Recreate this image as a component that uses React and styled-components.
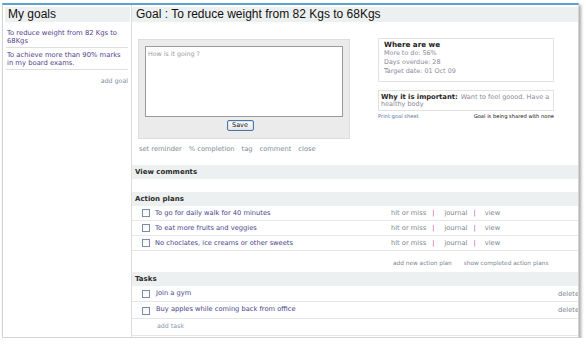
import React from "react";
import styled, { createGlobalStyle } from "styled-components";

const Global = createGlobalStyle`
  html, body { margin: 0; padding: 0; background: #fff; }
  body { font-family: "DejaVu Sans", Verdana, sans-serif; }
  * { box-sizing: border-box; }
`;

const Frame = styled.div`
  margin: 3px 0 0 2px;
  width: 577px;
  height: 335px;
  border: 1px solid #d4d4d4;
  border-top: 2px solid #5ea2d4;
  box-shadow: 2px 2px 3px rgba(0, 0, 0, 0.35);
  display: flex;
  overflow: hidden;
  background: #fff;
`;

const Sidebar = styled.div`
  width: 129px;
  border-right: 1px solid #dcdcdc;
  padding: 2px 1px 0 2px;
`;

const Main = styled.div`
  flex: 1;
  min-width: 0;
  overflow: hidden;
  padding-top: 2px;
`;

const PageTitle = styled.div`
  height: 15px;
  line-height: 15px;
  background: #edf0f0;
  font-family: "Liberation Sans", Arial, sans-serif;
  font-size: 12px;
  color: #111;
  padding-left: ${(p) => p.$indent || 3}px;
  white-space: nowrap;
`;

const GoalList = styled.div`
  margin: 4px 2px 0 1px;
`;

const GoalItem = styled.div`
  padding: 3px 5px 2px 1px;
  border-bottom: 1px solid #dedede;
  font-size: 6.8px;
  line-height: 8px;
  color: #553d8c;
`;

const AddGoal = styled.div`
  margin-top: 7px;
  text-align: right;
  font-size: 6.3px;
  line-height: 8px;
  color: #7d8fa0;
`;

const TopSection = styled.div`
  height: 143px;
  display: flex;
  padding: 17px 0 0 6px;
`;

const LeftCol = styled.div`
  width: 212px;
`;

const GrayBox = styled.div`
  width: 212px;
  height: 100px;
  background: #ebebeb;
  border: 1px solid #dddddd;
  padding: 6px 6px 0 6px;
`;

const TextBox = styled.div`
  width: 198px;
  height: 71px;
  background: #fff;
  border: 1px solid #9a9a9a;
  padding: 3px 2px;
  font-size: 6.3px;
  color: #9a9a9a;
`;

const SaveRow = styled.div`
  display: flex;
  justify-content: center;
  padding-top: 3px;
  padding-right: 8px;
`;

const SaveButton = styled.div`
  width: 27px;
  height: 11px;
  border: 1px solid #4a74a8;
  border-radius: 2px;
  background: linear-gradient(#fdfdfd, #e6e6e6);
  box-shadow: inset 0 0 0 1px #d8e4f2;
  font-size: 6.5px;
  line-height: 9px;
  text-align: center;
  color: #111;
`;

const ActionLinks = styled.div`
  display: flex;
  gap: 7px;
  margin-top: 6px;
  padding-left: 1px;
  font-size: 6.7px;
  line-height: 8px;
  color: #7d8b99;
  white-space: nowrap;
`;

const RightCol = styled.div`
  margin-left: 28px;
  width: 176px;
  margin-top: -1px;
`;

const InfoBox = styled.div`
  border: 1px solid #e2e2e2;
  padding: ${(p) => p.$pad};
  margin-bottom: ${(p) => p.$mb || 0}px;
  color: #8c8898;
  font-size: 6.4px;
`;

const InfoTitle = styled.div`
  font-weight: bold;
  font-size: 7.2px;
  line-height: 9px;
  color: #1e1e1e;
`;

const InfoLine = styled.div`
  line-height: 9px;
`;

const WhyLine = styled.div`
  font-size: 6.5px;
  line-height: 7px;
  color: #8c8898;
  white-space: nowrap;
`;

const WhyLabel = styled.b`
  color: #1e1e1e;
  font-size: 6.8px;
  margin-right: 3px;
`;

const PrintRow = styled.div`
  display: flex;
  justify-content: space-between;
  margin-top: 2px;
  font-size: 5.2px;
  line-height: 7px;
  white-space: nowrap;
`;

const PrintLink = styled.span`
  color: ${(p) => p.$c};
`;

const SectionBar = styled.div`
  height: 14px;
  line-height: 14px;
  background: #edf0f0;
  padding-left: 3px;
  font-size: 7px;
  font-weight: bold;
  color: #2a2a2a;
  margin-top: ${(p) => p.$mt || 0}px;
`;

const Row = styled.div`
  display: flex;
  align-items: center;
  height: ${(p) => p.$h}px;
  border-bottom: 1px solid #e6e6e6;
  padding-left: 10px;
  font-size: 6.7px;
  white-space: nowrap;
`;

const Check = styled.span`
  width: 8px;
  height: 8px;
  flex: none;
  border: 1px solid #7d8ca6;
  background: linear-gradient(#f4f6fa, #ffffff);
  margin-right: ${(p) => p.$gap}px;
  margin-top: ${(p) => p.$dy || 0}px;
`;

const ItemText = styled.span`
  color: #4a3f8c;
  width: ${(p) => p.$w}px;
  flex: none;
  margin-top: ${(p) => p.$dy || 0}px;
`;

const PlanLinks = styled.span`
  display: flex;
  color: #7d8792;
`;

const Pipe = styled.span`
  color: #c03ca8;
  margin: 0 ${(p) => p.$r}px 0 ${(p) => p.$l}px;
`;

const Delete = styled.span`
  color: #7d8792;
`;

const PlanFooter = styled.div`
  height: 21px;
  padding: 8px 0 0 261px;
  display: flex;
  gap: 12px;
  font-size: 5.8px;
  line-height: 8px;
  color: #7d8792;
  white-space: nowrap;
`;

const AddTask = styled.div`
  height: 17px;
  border-bottom: 1px solid #e6e6e6;
  padding: 3px 0 0 25px;
  font-size: 6.3px;
  line-height: 8px;
  color: #8a98a6;
`;

const goals = [
  "To reduce weight from 82 Kgs to 68Kgs",
  "To achieve more than 90% marks in my board exams.",
];

const plans = [
  "To go for daily walk for 40 minutes",
  "To eat more fruits and veggies",
  "No choclates, ice creams or other sweets",
];

const tasks = [
  { text: "Join a gym", h: 16 },
  { text: "Buy apples while coming back from office", h: 17 },
];

export default function App() {
  return (
    <>
      <Global />
      <Frame>
        <Sidebar>
          <PageTitle>My goals</PageTitle>
          <GoalList>
            {goals.map((g) => (
              <GoalItem key={g}>{g}</GoalItem>
            ))}
            <AddGoal>add goal</AddGoal>
          </GoalList>
        </Sidebar>
        <Main>
          <PageTitle $indent={4}>Goal : To reduce weight from 82 Kgs to 68Kgs</PageTitle>
          <TopSection>
            <LeftCol>
              <GrayBox>
                <TextBox>How is it going ?</TextBox>
                <SaveRow>
                  <SaveButton>Save</SaveButton>
                </SaveRow>
              </GrayBox>
              <ActionLinks>
                <span>set reminder</span>
                <span>% completion</span>
                <span>tag</span>
                <span>comment</span>
                <span>close</span>
              </ActionLinks>
            </LeftCol>
            <RightCol>
              <InfoBox $pad="1px 5px 5px 5px" $mb={8}>
                <InfoTitle>Where are we</InfoTitle>
                <InfoLine>More to do: 56%</InfoLine>
                <InfoLine>Days overdue: 28</InfoLine>
                <InfoLine>Target date: 01 Oct 09</InfoLine>
              </InfoBox>
              <InfoBox $pad="3px 2px 2px 2px">
                <WhyLine>
                  <WhyLabel>Why it is important:</WhyLabel>
                  <span>Want to feel goood. Have a</span>
                </WhyLine>
                <WhyLine>healthy body</WhyLine>
              </InfoBox>
              <PrintRow>
                <PrintLink $c="#5a7a9c">Print goal sheet</PrintLink>
                <PrintLink $c="#111">Goal is being shared with none</PrintLink>
              </PrintRow>
            </RightCol>
          </TopSection>
          <SectionBar>View comments</SectionBar>
          <SectionBar $mt={13}>Action plans</SectionBar>
          {plans.map((p) => (
            <Row key={p} $h={15}>
              <Check $gap={5} />
              <ItemText $w={236}>{p}</ItemText>
              <PlanLinks>
                hit or miss<Pipe $l={6} $r={10}>|</Pipe>journal<Pipe $l={6} $r={9}>|</Pipe>view
              </PlanLinks>
            </Row>
          ))}
          <PlanFooter>
            <span>add new action plan</span>
            <span>show completed action plans</span>
          </PlanFooter>
          <SectionBar>Tasks</SectionBar>
          {tasks.map((t) => (
            <Row key={t.text} $h={t.h}>
              <Check $gap={6} $dy={1} />
              <ItemText $w={402} $dy={-2}>{t.text}</ItemText>
              <Delete>delete</Delete>
            </Row>
          ))}
          <AddTask>add task</AddTask>
        </Main>
      </Frame>
    </>
  );
}
